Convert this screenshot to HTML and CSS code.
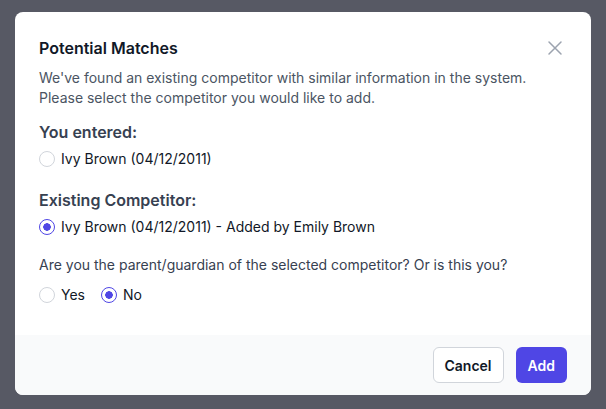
FILE: index.html
```html
<!DOCTYPE html>
<html>
<head>
<meta charset="utf-8">
<link rel="stylesheet" href="styles.css">
</head>
<body>
<div class="modal">
  <div class="content">
    <div class="header">
      <h2 class="title">Potential Matches</h2>
      <button class="close" aria-label="Close">
        <svg width="24" height="24" viewBox="0 0 24 24" fill="none" stroke="currentColor" stroke-width="1.5" stroke-linecap="round"><path d="M6 18L18 6M6 6l12 12"/></svg>
      </button>
    </div>
    <p class="desc">We've found an existing competitor with similar information in the system. Please select the competitor you would like to add.</p>
    <h3 class="section">You entered:</h3>
    <label class="option"><span class="radio"></span><span>Ivy Brown (04/12/2011)</span></label>
    <h3 class="section second">Existing Competitor:</h3>
    <label class="option"><span class="radio checked"></span><span>Ivy Brown (04/12/2011) - Added by Emily Brown</span></label>
    <p class="question">Are you the parent/guardian of the selected competitor? Or is this you?</p>
    <div class="inline">
      <label class="option"><span class="radio"></span><span>Yes</span></label>
      <label class="option"><span class="radio checked"></span><span>No</span></label>
    </div>
  </div>
  <div class="footer">
    <button class="btn cancel">Cancel</button>
    <button class="btn add">Add</button>
  </div>
</div>
</body>
</html>
```
FILE: styles.css
```css
* { box-sizing: border-box; }
html, body { margin: 0; height: 100%; }
body {
  background: #575964;
  padding: 12px 15px;
  font-family: Inter, "Noto Sans", sans-serif;
  color: #111827;
}
.modal {
  width: 576px;
  height: 383px;
  background: #fff;
  border-radius: 8px;
  overflow: hidden;
  display: flex;
  flex-direction: column;
}
.content {
  flex: 1;
  padding: 24px 24px 0 24px;
}
.header {
  display: flex;
  justify-content: space-between;
  align-items: center;
  height: 24px;
}
.title {
  margin: 0;
  font-size: 16px;
  line-height: 24px;
  font-weight: 600;
  color: #111827;
}
.close {
  border: 0;
  background: none;
  padding: 0;
  width: 24px;
  height: 24px;
  color: #9ca3af;
  display: flex;
}
.desc {
  margin: 8px 0 0;
  font-size: 14px;
  line-height: 20px;
  color: #4b5563;
  max-width: 500px;
}
.section {
  margin: 12px 0 0;
  font-size: 16px;
  line-height: 24px;
  font-weight: 600;
  color: #374151;
}
.section.second { margin-top: 19px; }
.option {
  display: flex;
  align-items: center;
  gap: 6px;
  font-size: 14px;
  line-height: 20px;
  color: #111827;
  margin-top: 5px;
}
.radio {
  width: 16px;
  height: 16px;
  border-radius: 50%;
  border: 1px solid #d1d5db;
  background: #fff;
  flex-shrink: 0;
}
.radio.checked {
  border: 1.5px solid #4f46e5;
  background: radial-gradient(circle, #4f46e5 0 3.5px, #fff 4px);
}
.question {
  margin: 18px 0 0;
  font-size: 14px;
  line-height: 20px;
  color: #374151;
}
.inline {
  display: flex;
  gap: 16px;
  margin-top: 10px;
}
.inline .option { margin-top: 0; }
.footer {
  height: 60px;
  background: #f9fafb;
  display: flex;
  justify-content: flex-end;
  align-items: center;
  gap: 12px;
  padding: 0 24px;
}
.btn {
  height: 36px;
  border-radius: 6px;
  font-family: Inter, "Noto Sans", sans-serif;
  font-size: 14px;
  font-weight: 600;
  padding: 0 11px;
}
.cancel {
  background: #fff;
  border: 1px solid #d1d5db;
  color: #111827;
}
.add {
  background: #4f46e5;
  border: 0;
  color: #fff;
  padding: 0 12px;
}
```
